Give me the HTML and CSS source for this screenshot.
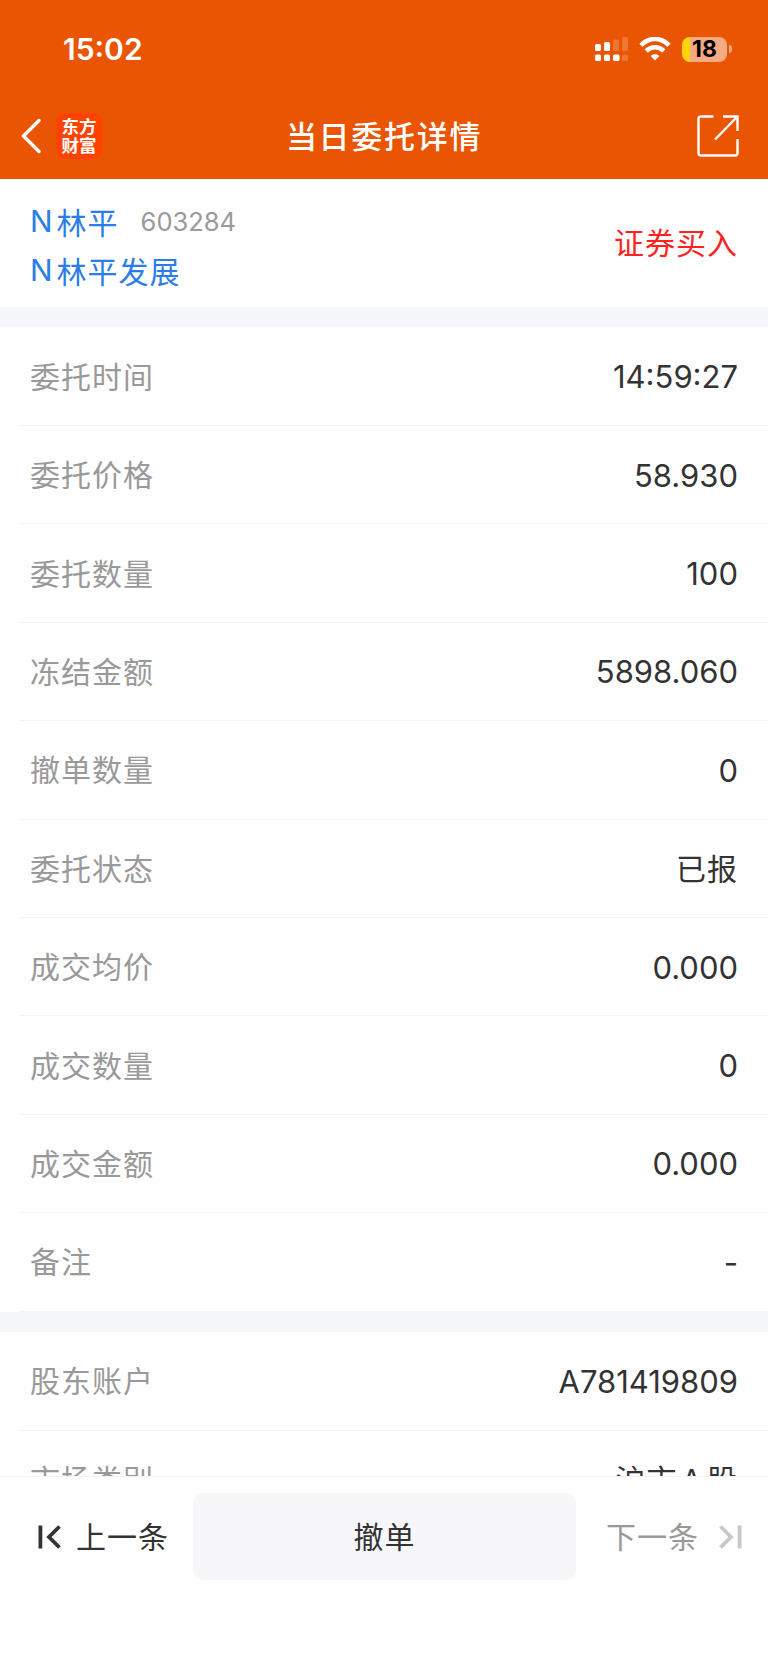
FILE: index.html
```
<!DOCTYPE html>
<html lang="zh-CN">
<head>
    <meta charset="UTF-8">
    <meta name="viewport" content="width=device-width, initial-scale=1.0">
    <title>当日委托详情</title>
    <link rel="stylesheet" href="styles.css">
</head>
<body>
    <div class="app">
        <header class="header">
            <div class="status-bar">
                <span class="time">15:02</span>
                <div class="status-icons">
                    <svg class="signal" width="34" height="26" viewBox="0 0 34 26" fill="#fff">
                        <rect x="0" y="8" width="6" height="7" rx="1.5"/>
                        <rect x="9" y="6" width="6" height="9" rx="1.5"/>
                        <rect x="18" y="3.5" width="6" height="11.5" rx="1.5" opacity=".2"/>
                        <rect x="27" y="1" width="6" height="14" rx="1.5" opacity=".2"/>
                        <rect x="0" y="18.5" width="6" height="6.5" rx="1.5"/>
                        <rect x="9" y="18.5" width="6" height="6.5" rx="1.5"/>
                        <rect x="18" y="18.5" width="6.5" height="6.5" rx="1.5"/>
                        <rect x="27" y="18.5" width="6" height="6.5" rx="1.5" opacity=".2"/>
                    </svg>
                    <svg class="wifi" width="32" height="24" viewBox="0 0 32 24" fill="none" stroke="#fff" stroke-width="4.6">
                        <path d="M2 8.3C10-.2 22-.2 30 8.3"/>
                        <path d="M7.2 14C12.3 8.9 19.7 8.9 24.8 14"/>
                        <path d="M16 23.4l-4.4-4.5c2.4-2.3 6.4-2.3 8.8 0z" fill="#fff" stroke="none"/>
                    </svg>
                    <div class="battery"><span>18</span></div>
                    <i class="battery-tip"></i>
                </div>
            </div>
            <nav class="nav">
                <div class="nav-left">
                    <svg width="20" height="36" viewBox="0 0 20 36" fill="none" stroke="#fff" stroke-width="3.5" stroke-linecap="round" stroke-linejoin="round">
                        <path d="M18 2.5L2.5 18L18 33.5"/>
                    </svg>
                    <div class="logo">东方<br>财富</div>
                </div>
                <h1 class="title">当日委托详情</h1>
                <svg class="share" width="42" height="42" viewBox="0 0 42 42" fill="none" stroke="#fff" stroke-width="2.4">
                    <path d="M16.5 1.5H4Q1.5 1.5 1.5 4V38Q1.5 40.5 4 40.5H38Q40.5 40.5 40.5 38V24"/>
                    <path d="M26 1.5H40.5V16M40 2L18 24.5"/>
                </svg>
            </nav>
        </header>

        <main class="content">
            <section class="stock">
                <div class="stock-info">
                    <div class="stock-name">N<b>林平</b> <span class="code">603284</span></div>
                    <div class="stock-name">N<b>林平发展</b></div>
                </div>
                <span class="side">证券买入</span>
            </section>

            <section class="list">
                <div class="row"><span class="label">委托时间</span><span class="value">14:59:27</span></div>
                <div class="row"><span class="label">委托价格</span><span class="value">58.930</span></div>
                <div class="row"><span class="label">委托数量</span><span class="value">100</span></div>
                <div class="row"><span class="label">冻结金额</span><span class="value">5898.060</span></div>
                <div class="row"><span class="label">撤单数量</span><span class="value">0</span></div>
                <div class="row"><span class="label">委托状态</span><span class="value cn">已报</span></div>
                <div class="row"><span class="label">成交均价</span><span class="value">0.000</span></div>
                <div class="row"><span class="label">成交数量</span><span class="value">0</span></div>
                <div class="row"><span class="label">成交金额</span><span class="value">0.000</span></div>
                <div class="row"><span class="label">备注</span><span class="value">-</span></div>
            </section>

            <section class="list">
                <div class="row"><span class="label">股东账户</span><span class="value">A781419809</span></div>
                <div class="row"><span class="label">市场类别</span><span class="value cn">沪市 A 股</span></div>
            </section>
        </main>

        <footer class="footer">
            <div class="page-btn prev">
                <svg width="23" height="24" viewBox="0 0 23 24" fill="none" stroke="#333" stroke-width="3.8">
                    <path d="M2.4 .5V23.5M21.5 1.5L11 12L21.5 22.5"/>
                </svg>
                <span>上一条</span>
            </div>
            <button class="cancel-btn">撤单</button>
            <div class="page-btn next">
                <span>下一条</span>
                <svg width="23" height="24" viewBox="0 0 23 24" fill="none" stroke="#c8c8c8" stroke-width="3.8">
                    <path d="M20.6 .5V23.5M1.5 1.5L12 12L1.5 22.5"/>
                </svg>
            </div>
        </footer>
    </div>
</body>
</html>
```
FILE: styles.css
```
* {
    box-sizing: border-box;
}
body {
    margin: 0;
    background-color: #fefefe;
    color: #333;
    font-family: Inter, "Noto Sans CJK SC", sans-serif;
    font-size: 30px;
}
.app {
    display: flex;
    flex-direction: column;
    height: 1664px;
    overflow: hidden;
}
.header {
    flex: none;
    height: 179px;
    background-color: #ea5504;
    color: #fff;
}
.status-bar {
    display: flex;
    justify-content: space-between;
    align-items: center;
    height: 98px;
    padding: 0 36px 0 63px;
}
.time {
    font-size: 30px;
    font-weight: 600;
}
.status-icons {
    display: flex;
    align-items: center;
}
.wifi {
    margin: 0 11px 0 10px;
}
.battery {
    width: 45px;
    height: 25px;
    border-radius: 8px;
    background: linear-gradient(to right, #ffd60a 8px, #f5ab81 8px);
    color: #000;
    font-size: 23px;
    font-weight: 700;
    line-height: 25px;
    text-align: center;
}
.battery-tip {
    width: 3px;
    height: 8px;
    margin-left: 2px;
    border-radius: 0 3px 3px 0;
    background-color: #f5ab81;
}
.nav {
    display: grid;
    grid-template-columns: 1fr auto 1fr;
    align-items: center;
    height: 76px;
    padding: 0 29px 0 21px;
}
.nav-left {
    display: flex;
    align-items: center;
    gap: 15px;
}
.logo {
    width: 46px;
    height: 46px;
    padding-top: 3px;
    border-radius: 9px;
    background-color: #ff4200;
    font-family: "Noto Sans CJK SC", sans-serif;
    font-size: 17.5px;
    font-weight: 700;
    line-height: 19px;
    text-align: center;
}
.title {
    margin: 0;
    padding: 0 0 4px 8px;
    font-size: 31px;
    font-weight: 500;
    letter-spacing: 1.7px;
}
.share {
    justify-self: end;
}
.content {
    flex: 1;
    min-height: 0;
    overflow: hidden;
}
.stock {
    display: flex;
    justify-content: space-between;
    align-items: center;
    height: 128px;
    padding: 5px 31px 0 30px;
}
.stock-name {
    display: flex;
    align-items: center;
    height: 49px;
    color: #2b7de9;
}
.stock-name b {
    margin-left: 4px;
    padding-bottom: 1px;
    font-weight: 400;
    letter-spacing: 1px;
}
.code {
    margin-left: 22px;
    padding-top: 1px;
    color: #999;
    font-size: 25.5px;
}
.side {
    margin-right: -1px;
    padding-bottom: 10px;
    color: #ff2020;
    letter-spacing: 1px;
}
.list {
    border-top: 20px solid #f5f7fa;
}
.row {
    display: flex;
    justify-content: space-between;
    align-items: center;
    height: 98.4px;
    margin-left: 20px;
    padding: 0 30px 0 10px;
    border-bottom: 1px solid #f4f4f4;
}
.row:first-child {
    height: 99px;
}
.label {
    padding-bottom: 3px;
    color: #999;
    letter-spacing: 1px;
}
.value {
    padding-top: 1px;
    font-size: 31px;
}
.value.cn {
    padding: 0 0 3px;
    font-size: 30px;
    letter-spacing: 1px;
    word-spacing: -5.5px;
}
.footer {
    display: flex;
    flex: none;
    justify-content: space-between;
    align-items: flex-start;
    height: 188px;
    padding: 16px 26px 0 38px;
    border-top: 1px solid #f3f3f3;
}
.page-btn {
    display: flex;
    align-items: center;
    height: 87px;
    letter-spacing: 1px;
}
.page-btn span {
    padding-bottom: 4px;
}
.prev {
    gap: 15px;
}
.next {
    gap: 20px;
    color: #999;
}
.cancel-btn {
    width: 383px;
    height: 87px;
    margin-left: -6px;
    padding: 0 0 4px;
    border: none;
    border-radius: 10px;
    background-color: #f7f7fa;
    color: #333;
    font: inherit;
    letter-spacing: 1px;
}
```
